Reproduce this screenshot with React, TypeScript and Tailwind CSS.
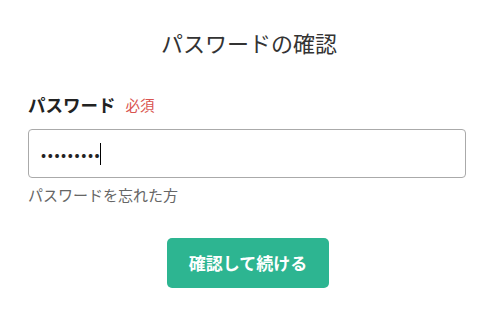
export default function App() {
  return (
    <div
      className="w-[496px] h-[316px] bg-white px-[28px] pt-[25px]"
      style={{ fontFamily: '"Noto Sans CJK JP", "Noto Sans", sans-serif' }}
    >
      <h1 className="text-center text-[22px] leading-[34px] text-[#333] pl-[2px]">パスワードの確認</h1>

      <div className="mt-[34px] flex items-center gap-[10px]">
        <span className="text-[17.5px] font-bold text-[#222] leading-[24px]">パスワード</span>
        <span className="text-[14.5px] text-[#d9534f] leading-[24px]">必須</span>
      </div>

      <div className="mt-[12px] w-[438px] h-[49px] border border-[#aaa] rounded-[4px] flex items-center pl-[12px]">
        <span className="text-[15px] tracking-[1.6px] text-[#222] leading-none">•••••••••</span>
        <span className="w-[1px] h-[22px] bg-black -ml-[1px]"></span>
      </div>

      <p className="mt-[6px] text-[15px] leading-[22px] text-[#666]">パスワードを忘れた方</p>

      <div className="mt-[32px] flex justify-center">
        <button className="w-[162px] h-[50px] rounded-[5px] bg-[#2db591] text-white text-[17px] font-bold">
          確認して続ける
        </button>
      </div>
    </div>
  );
}
